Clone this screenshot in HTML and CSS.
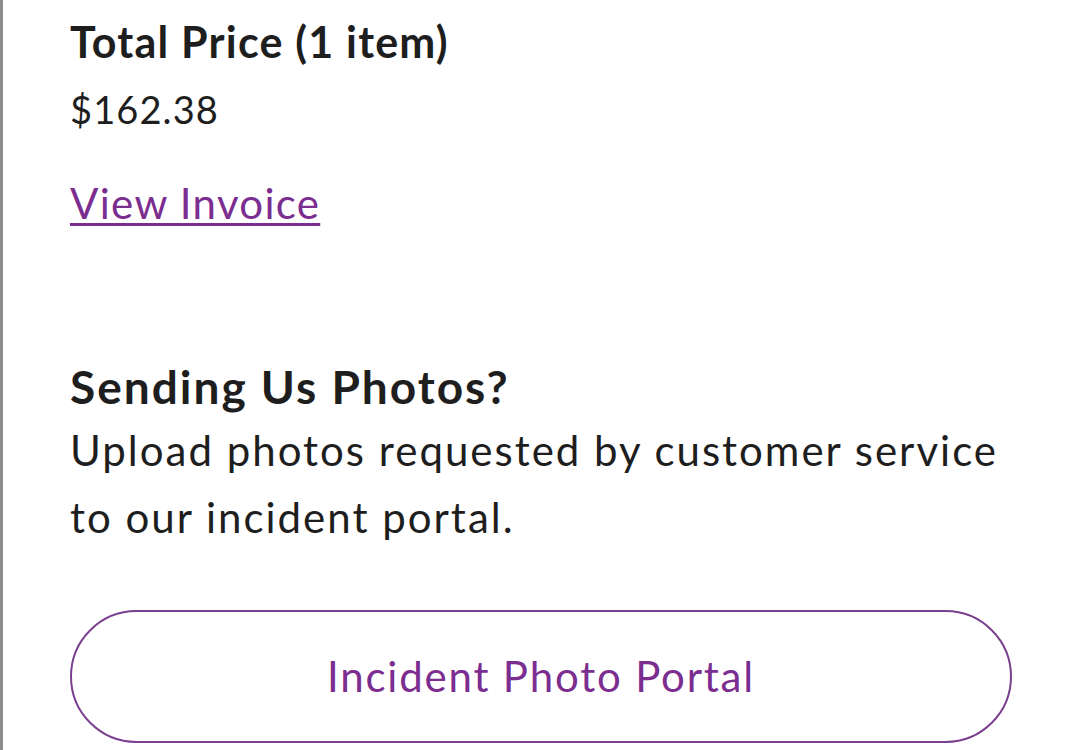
FILE: index.html
```html
<!DOCTYPE html>
<html lang="en">
<head>
    <meta charset="UTF-8">
    <meta name="viewport" content="width=device-width, initial-scale=1.0">
    <title>Order Details</title>
    <link rel="stylesheet" href="styles.css">
</head>
<body>
    <div class="order-panel">
        <section class="price-block">
            <h2 class="block-title">Total Price (1 item)</h2>
            <p class="price">$162.38</p>
            <a href="#" class="invoice-link">View Invoice</a>
        </section>
        <section class="photos-block">
            <h2 class="block-title large">Sending Us Photos?</h2>
            <p class="photos-text">Upload photos requested by customer service to our incident portal.</p>
            <button class="outline-button">Incident Photo Portal</button>
        </section>
    </div>
</body>
</html>
```

FILE: styles.css
```css
body, html {
    margin: 0;
    padding: 0;
    font-family: Lato, "Noto Sans", sans-serif;
    background-color: #ffffff;
    color: #1e1e1e;
}
.order-panel {
    height: 750px;
    box-sizing: border-box;
    border-left: 3px solid #8c8c8c;
    padding: 0 68px 0 67px;
    display: flex;
    flex-direction: column;
    overflow: hidden;
}
.block-title {
    margin: 0;
    font-size: 43px;
    font-weight: bold;
    line-height: 60px;
    letter-spacing: 1.2px;
}
.block-title.large {
    font-size: 46px;
    letter-spacing: 2px;
}
.price-block {
    padding-top: 12px;
}
.price {
    margin: 6px 0 0;
    font-size: 38px;
    line-height: 62px;
    letter-spacing: 1.1px;
}
.invoice-link {
    display: inline-block;
    margin-top: 35px;
    font-size: 42px;
    line-height: 56px;
    letter-spacing: 1.3px;
    color: #7b2d90;
    text-decoration: underline;
    text-decoration-thickness: 3px;
    text-underline-offset: 4px;
}
.photos-block {
    padding-top: 126px;
}
.photos-text {
    margin: 0;
    font-size: 42px;
    line-height: 67px;
    letter-spacing: 2px;
}
.outline-button {
    margin-top: 59px;
    width: 100%;
    height: 133px;
    border: 2px solid #7b3f8f;
    border-radius: 67px;
    background: none;
    color: #7b2d90;
    font-family: inherit;
    font-size: 42px;
    letter-spacing: 1.8px;
    padding-bottom: 2px;
    cursor: pointer;
}
```
